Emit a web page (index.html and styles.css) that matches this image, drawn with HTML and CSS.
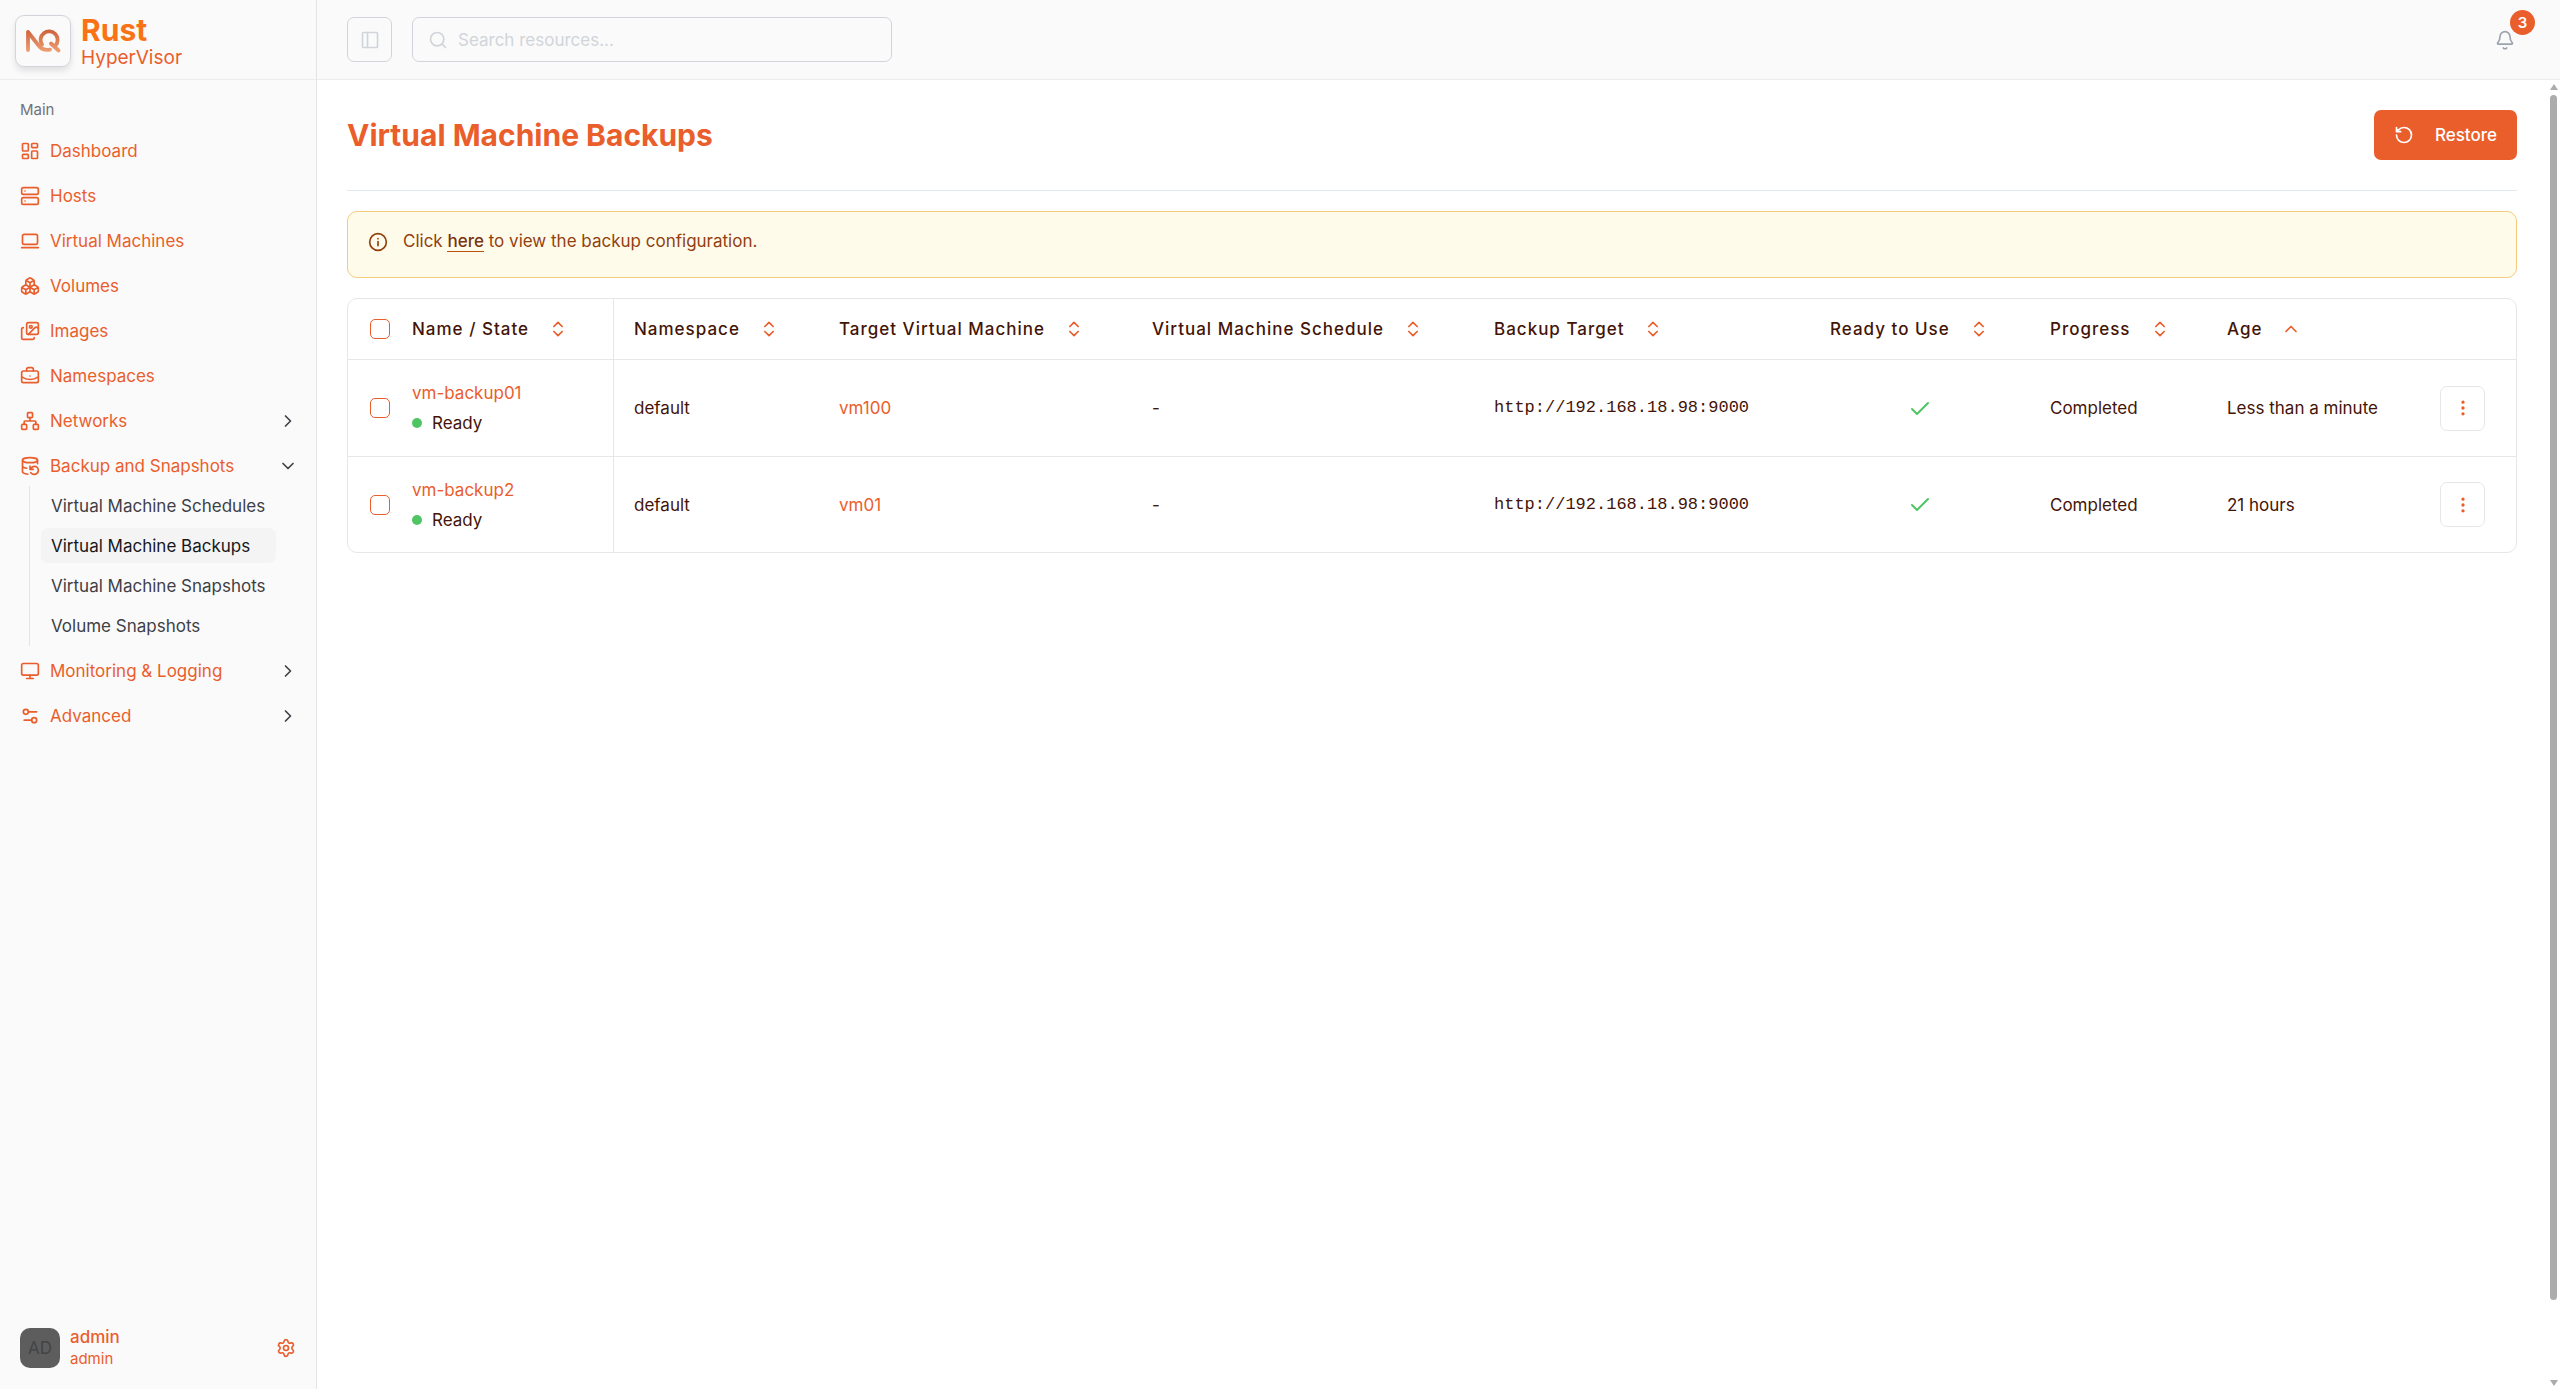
FILE: index.html
```html
<!DOCTYPE html>
<html lang="en">
<head>
<meta charset="utf-8">
<title>Virtual Machine Backups</title>
<link rel="stylesheet" href="styles.css">
</head>
<body>
<svg class="sprite" aria-hidden="true">
  <symbol id="i-sort" viewBox="0 0 24 24"><path d="m7 15 5 5 5-5M7 9l5-5 5 5"/></symbol>
  <symbol id="i-right" viewBox="0 0 24 24"><path d="m9 18 6-6-6-6"/></symbol>
  <symbol id="i-check" viewBox="0 0 24 24"><path d="M20 6 9 17l-5-5"/></symbol>
  <symbol id="i-dots" viewBox="0 0 24 24"><circle cx="12" cy="5" r="1"/><circle cx="12" cy="12" r="1"/><circle cx="12" cy="19" r="1"/></symbol>
</svg>
<div class="app">
  <aside class="sidebar">
    <div class="brand">
      <div class="logo">
        <svg viewBox="0 0 36 24" width="36" height="24">
          <defs><linearGradient id="lg" gradientUnits="userSpaceOnUse" x1="0" y1="0" x2="0" y2="24"><stop offset="0" stop-color="#cb6038"/><stop offset="1" stop-color="#f0a276"/></linearGradient></defs>
          <g stroke="url(#lg)" stroke-width="3.8"><path d="M3 21V3l11 14c2.500 3.200 6 4.400 11 3.600"/><path d="M17 15.500a8.500 8.500 0 1 1 13.500 1M26 14.500l7.500 7"/></g>
        </svg>
      </div>
      <div class="brand-text"><strong>Rust</strong><span>HyperVisor</span></div>
    </div>
    <nav class="nav">
      <h2>Main</h2>
      <ul class="menu">
        <li><a href="#"><svg class="ico" viewBox="0 0 24 24"><rect x="3" y="3" width="7" height="9" rx="1"/><rect x="14" y="3" width="7" height="5" rx="1"/><rect x="14" y="12" width="7" height="9" rx="1"/><rect x="3" y="16" width="7" height="5" rx="1"/></svg>Dashboard</a></li>
        <li><a href="#"><svg class="ico" viewBox="0 0 24 24"><rect x="2" y="2" width="20" height="8" rx="2"/><rect x="2" y="14" width="20" height="8" rx="2"/><path d="M6 6h.01M6 18h.01"/></svg>Hosts</a></li>
        <li><a href="#"><svg class="ico" viewBox="0 0 24 24"><rect x="3" y="4" width="18" height="12" rx="2"/><path d="M2 20h20"/></svg>Virtual Machines</a></li>
        <li><a href="#"><svg class="ico" viewBox="0 0 24 24"><path d="M2.97 12.92A2 2 0 0 0 2 14.63v3.24a2 2 0 0 0 .97 1.71l3 1.8a2 2 0 0 0 2.06 0L12 19v-5.5l-5-3-4.03 2.42ZM7 16.5l-4.74-2.85M7 16.5l5-3M7 16.5v5.17M12 13.5V19l3.97 2.38a2 2 0 0 0 2.06 0l3-1.8a2 2 0 0 0 .97-1.71v-3.24a2 2 0 0 0-.97-1.71L17 10.5l-5 3ZM17 16.5l-5-3M17 16.5l4.74-2.85M17 16.5v5.17M7.97 4.42A2 2 0 0 0 7 6.13v4.37l5 3 5-3V6.13a2 2 0 0 0-.97-1.71l-3-1.8a2 2 0 0 0-2.06 0l-3 1.8ZM12 8 7.26 5.15M12 8l4.74-2.85M12 13.5V8"/></svg>Volumes</a></li>
        <li><a href="#"><svg class="ico" viewBox="0 0 24 24"><rect x="8" y="2" width="14" height="14" rx="2"/><circle cx="13" cy="7" r="1.6"/><path d="m22 9-1-1a2 2 0 0 0-3 0l-8 8M4 8a2 2 0 0 0-2 2v10a2 2 0 0 0 2 2h11a2 2 0 0 0 2-2"/></svg>Images</a></li>
        <li><a href="#"><svg class="ico" viewBox="0 0 24 24"><path d="M12 12h.01M16 6V4a2 2 0 0 0-2-2h-4a2 2 0 0 0-2 2v2M22 13a18.15 18.15 0 0 1-20 0"/><rect x="2" y="6" width="20" height="14" rx="2"/></svg>Namespaces</a></li>
        <li><a href="#"><svg class="ico" viewBox="0 0 24 24"><rect x="16" y="16" width="6" height="6" rx="1"/><rect x="2" y="16" width="6" height="6" rx="1"/><rect x="9" y="2" width="6" height="6" rx="1"/><path d="M5 16v-3a1 1 0 0 1 1-1h12a1 1 0 0 1 1 1v3M12 12V8"/></svg>Networks<svg class="chev" viewBox="0 0 24 24"><use href="#i-right"/></svg></a></li>
        <li><a href="#"><svg class="ico" viewBox="0 0 24 24"><ellipse cx="12" cy="5" rx="9" ry="3"/><path d="M3 12a9 3 0 0 0 5 2.69M21 9.3V5M3 5v14a9 3 0 0 0 6.47 2.88M12 12v4h4M13 20a5 5 0 0 0 9-3 4.5 4.5 0 0 0-4.5-4.5c-1.33 0-2.54.54-3.41 1.41L12 16"/></svg>Backup and Snapshots<svg class="chev" viewBox="0 0 24 24"><path d="m6 9 6 6 6-6"/></svg></a>
          <ul class="submenu">
            <li><a href="#">Virtual Machine Schedules</a></li>
            <li><a href="#" class="current" aria-current="page">Virtual Machine Backups</a></li>
            <li><a href="#">Virtual Machine Snapshots</a></li>
            <li><a href="#">Volume Snapshots</a></li>
          </ul>
        </li>
        <li><a href="#"><svg class="ico" viewBox="0 0 24 24"><rect x="2" y="3" width="20" height="14" rx="2"/><path d="M8 21h8M12 17v4"/></svg>Monitoring &amp; Logging<svg class="chev" viewBox="0 0 24 24"><use href="#i-right"/></svg></a></li>
        <li><a href="#"><svg class="ico" viewBox="0 0 24 24"><path d="M20 7h-9M14 17H5"/><circle cx="17" cy="17" r="3"/><circle cx="7" cy="7" r="3"/></svg>Advanced<svg class="chev" viewBox="0 0 24 24"><use href="#i-right"/></svg></a></li>
      </ul>
    </nav>
    <div class="user">
      <div class="avatar">AD</div>
      <div class="user-text"><strong>admin</strong><span>admin</span></div>
      <button class="gear" aria-label="Settings"><svg class="ico" viewBox="0 0 24 24"><path d="M9.67 4.14a2.34 2.34 0 0 1 4.66 0 2.34 2.34 0 0 0 3.32 1.91 2.34 2.34 0 0 1 2.33 4.03 2.34 2.34 0 0 0 0 3.84 2.34 2.34 0 0 1-2.33 4.03 2.34 2.34 0 0 0-3.32 1.91 2.34 2.34 0 0 1-4.66 0 2.34 2.34 0 0 0-3.32-1.91 2.34 2.34 0 0 1-2.33-4.03 2.34 2.34 0 0 0 0-3.84 2.34 2.34 0 0 1 2.33-4.03 2.34 2.34 0 0 0 3.32-1.91"/><circle cx="12" cy="12" r="3"/></svg></button>
    </div>
  </aside>

  <div class="page">
    <header class="topbar">
      <button class="toggle" aria-label="Toggle sidebar"><svg class="ico" viewBox="0 0 24 24"><rect x="3" y="3" width="18" height="18" rx="1"/><path d="M9 3v18"/></svg></button>
      <label class="search"><svg class="ico" viewBox="0 0 24 24"><circle cx="11" cy="11" r="8"/><path d="m21 21-4.300-4.300"/></svg><input type="text" placeholder="Search resources..." aria-label="Search resources"></label>
      <button class="bell" aria-label="Notifications"><svg class="ico" viewBox="0 0 24 24"><path d="M10 21.500a2.500 2.500 0 0 0 4 0M3.300 15.300A1 1 0 0 0 4 17h16a1 1 0 0 0 .740-1.670C19.400 13.900 18 12.500 18 8A6 6 0 0 0 6 8c0 4.500-1.400 5.900-2.700 7.300"/></svg><span class="badge">3</span></button>
    </header>
    <div class="scroll">
      <main class="content">
        <div class="title-row">
          <h1>Virtual Machine Backups</h1>
          <button class="restore"><svg class="ico" viewBox="0 0 24 24"><path d="M3 12a9 9 0 1 0 9-9 9.750 9.750 0 0 0-6.740 2.740L3 8M3 3v5h5"/></svg>Restore</button>
        </div>
        <div class="alert"><svg class="ico" viewBox="0 0 24 24"><circle cx="12" cy="12" r="10"/><path d="M12 16.500v-5M12 8h.01"/></svg><p>Click <a href="#">here</a> to view the backup configuration.</p></div>
        <div class="table-card">
          <table>
            <colgroup><col class="c-name"><col class="c-ns"><col class="c-target"><col class="c-sched"><col class="c-url"><col class="c-ready"><col class="c-prog"><col class="c-age"><col class="c-act"></colgroup>
            <thead><tr>
              <th><div class="name-cell"><input type="checkbox" aria-label="Select all"><button>Name / State<svg class="sort" viewBox="0 0 24 24"><use href="#i-sort"/></svg></button></div></th>
              <th><button>Namespace<svg class="sort" viewBox="0 0 24 24"><use href="#i-sort"/></svg></button></th>
              <th><button>Target Virtual Machine<svg class="sort" viewBox="0 0 24 24"><use href="#i-sort"/></svg></button></th>
              <th><button>Virtual Machine Schedule<svg class="sort" viewBox="0 0 24 24"><use href="#i-sort"/></svg></button></th>
              <th><button>Backup Target<svg class="sort" viewBox="0 0 24 24"><use href="#i-sort"/></svg></button></th>
              <th><button>Ready to Use<svg class="sort" viewBox="0 0 24 24"><use href="#i-sort"/></svg></button></th>
              <th><button>Progress<svg class="sort" viewBox="0 0 24 24"><use href="#i-sort"/></svg></button></th>
              <th><button>Age<svg class="sort" viewBox="0 0 24 24"><path d="m6 15 6-6 6 6"/></svg></button></th>
              <th></th>
            </tr></thead>
            <tbody>
              <tr>
                <td><div class="name-cell"><input type="checkbox" aria-label="Select vm-backup01"><div class="name"><a href="#">vm-backup01</a><span class="state">Ready</span></div></div></td>
                <td>default</td><td><a href="#">vm100</a></td><td>-</td><td class="mono">http://192.168.18.98:9000</td>
                <td class="ready"><svg viewBox="0 0 24 24" role="img" aria-label="Yes"><use href="#i-check"/></svg></td><td>Completed</td><td>Less than a minute</td>
                <td class="act"><button aria-label="Actions"><svg class="ico" viewBox="0 0 24 24"><use href="#i-dots"/></svg></button></td>
              </tr>
              <tr>
                <td><div class="name-cell"><input type="checkbox" aria-label="Select vm-backup2"><div class="name"><a href="#">vm-backup2</a><span class="state">Ready</span></div></div></td>
                <td>default</td><td><a href="#">vm01</a></td><td>-</td><td class="mono">http://192.168.18.98:9000</td>
                <td class="ready"><svg viewBox="0 0 24 24" role="img" aria-label="Yes"><use href="#i-check"/></svg></td><td>Completed</td><td>21 hours</td>
                <td class="act"><button aria-label="Actions"><svg class="ico" viewBox="0 0 24 24"><use href="#i-dots"/></svg></button></td>
              </tr>
            </tbody>
          </table>
        </div>
      </main>
      <div class="scrollbar" aria-hidden="true"><i class="up"></i><i class="thumb"></i><i class="down"></i></div>
    </div>
  </div>
</div>
</body>
</html>
```

FILE: styles.css
```css
* { box-sizing: border-box; }
body { margin: 0; background: #fff; color: #431407; font-family: Inter, "Liberation Sans", sans-serif; font-size: 17px; line-height: 24px; }
a { color: #ea5e2c; text-decoration: none; }
ul { list-style: none; margin: 0; padding: 0; }
h1, h2, p { margin: 0; }
button { font: inherit; color: inherit; background: none; border: 0; padding: 0; }
svg { flex: none; fill: none; stroke: currentColor; stroke-width: 2; stroke-linecap: round; stroke-linejoin: round; }
.sprite { display: none; }
.ico { width: 20px; height: 20px; }

.app { display: flex; min-height: 100vh; }
.sidebar { flex: none; display: flex; flex-direction: column; width: 317px; background: #fafafa; border-right: 1px solid #e4e4e7; color: #ea5e2c; }
.brand { display: flex; align-items: center; gap: 10px; height: 80px; padding: 2px 15px 0; border-bottom: 1px solid #ececee; }
.logo { display: grid; place-items: center; width: 56px; height: 52px; border: 1px solid #d1d5db; border-radius: 9px; box-shadow: 0 4px 6px #0000001a; }
.brand-text { display: flex; flex-direction: column; padding-top: 2px; }
.brand-text strong { color: #f97316; font-size: 30px; line-height: 32px; }
.brand-text span { font-size: 19px; line-height: 24px; }

.nav { flex: 1; padding: 10px; }
.nav h2 { padding: 0 10px; color: #71717a; font-size: 15px; font-weight: 400; line-height: 40px; }
.menu { display: grid; gap: 5px; padding-top: 1px; }
.menu a { display: flex; align-items: center; gap: 10px; height: 40px; padding: 0 8px 0 10px; }
.chev { width: 20px; height: 20px; margin-left: auto; color: #3f3f46; }
.submenu { display: grid; gap: 5px; margin: 0 30px 0 19px; padding: 2px 0 3px 11px; border-left: 1px solid #e4e4e7; }
.submenu a { height: 35px; padding: 0 10px; border-radius: 7px; color: #3f3f46; white-space: nowrap; }
.submenu .current { background: #f4f4f5; color: #18181b; }

.user { display: flex; align-items: center; gap: 10px; padding: 20px; }
.avatar { display: grid; place-items: center; width: 40px; height: 40px; border-radius: 10px; background: #5d5d5d; color: #444; }
.user-text { flex: 1; display: flex; flex-direction: column; font-size: 15px; line-height: 21px; }
.user-text strong { font-size: 17px; font-weight: 500; }
.gear { display: grid; }

.page { flex: 1; min-width: 0; display: flex; flex-direction: column; }
.topbar { display: flex; align-items: center; gap: 20px; height: 80px; padding: 0 42px 0 30px; background: #fafafa; border-bottom: 1px solid #ececee; color: #d1d5db; }
.toggle, .search { display: flex; align-items: center; height: 45px; border: 1px solid #d1d5db; border-radius: 7px; }
.toggle { width: 45px; justify-content: center; }
.search { width: 480px; gap: 10px; padding: 0 15px; }
.search input { flex: 1; min-width: 0; padding: 0; border: 0; outline: 0; background: none; font: inherit; }
.search input::placeholder { color: #d1d5db; }
.bell { position: relative; display: grid; margin-left: auto; padding-right: 3px; color: #9ca3af; }
.badge { position: absolute; left: 15px; top: -20px; width: 25px; border-radius: 50%; background: #ea5e2c; color: #fff; font-size: 15px; font-weight: 600; line-height: 25px; text-align: center; }

.scroll { flex: 1; display: flex; }
.content { flex: 1; min-width: 0; padding: 30px; }
.title-row { display: flex; justify-content: space-between; padding-bottom: 30px; border-bottom: 1px solid #e2e8f0; }
h1 { color: #ea5e2c; font-size: 30px; line-height: 50px; }
.restore { display: flex; align-items: center; gap: 21px; height: 50px; padding: 0 20px; border-radius: 7px; background: #ea5e2c; color: #fff; font-weight: 500; }
.alert { display: flex; gap: 15px; margin: 20px 0; padding: 17px 20px 24px; border: 1px solid #f5cb7c; border-radius: 10px; background: #fffbeb; color: #92400e; }
.alert .ico { margin-top: 3px; }
.alert a { color: #78350f; font-weight: 500; border-bottom: 1px solid #b45309; }

.table-card { border: 1px solid #e5e7eb; border-radius: 10px; overflow: hidden; }
table { width: 100%; border-collapse: separate; border-spacing: 0; table-layout: fixed; }
.c-name { width: 266px; } .c-ns { width: 205px; } .c-target { width: 313px; } .c-sched { width: 342px; } .c-url { width: 336px; } .c-ready { width: 220px; } .c-prog { width: 177px; } .c-age { width: 213px; } .c-act { width: 96px; }
th, td { padding: 0 20px; text-align: left; white-space: nowrap; }
th { height: 61px; font-weight: 500; letter-spacing: 1px; border-bottom: 1px solid #e5e7eb; }
th button { display: flex; align-items: center; gap: 19px; letter-spacing: inherit; }
td { height: 96px; }
tr + tr td { border-top: 1px solid #e5e7eb; }
th:first-child, td:first-child { border-right: 1px solid #e5e7eb; }
.sort { width: 20px; height: 20px; color: #ea5e2c; }
.name-cell { display: flex; align-items: center; gap: 22px; }
input[type="checkbox"] { appearance: none; flex: none; width: 20px; height: 20px; margin: 0 0 0 2px; border: 1px solid #ea5e2c; border-radius: 5px; }
.name { display: flex; flex-direction: column; line-height: 30px; }
.state { display: flex; align-items: center; gap: 10px; }
.state::before { content: ""; width: 10px; height: 10px; border-radius: 50%; background: #4fc663; }
.mono { font-family: "Liberation Mono", monospace; }
.ready { text-align: center; }
.ready svg { width: 24px; height: 24px; color: #4fc663; vertical-align: middle; }
.act button { display: grid; place-items: center; width: 45px; height: 45px; border: 1px solid #e5e7eb; border-radius: 7px; color: #ea5e2c; }

.scrollbar { flex: none; display: flex; flex-direction: column; align-items: center; gap: 5px; width: 13px; padding: 4px 0 3px; }
.thumb { flex: 1; width: 7px; margin-bottom: 75px; border-radius: 4px; background: #acacac; }
.up, .down { border: 4px solid transparent; }
.up { border-top: 0; border-bottom: 6px solid #acacac; }
.down { border-bottom: 0; border-top: 6px solid #acacac; }
```
